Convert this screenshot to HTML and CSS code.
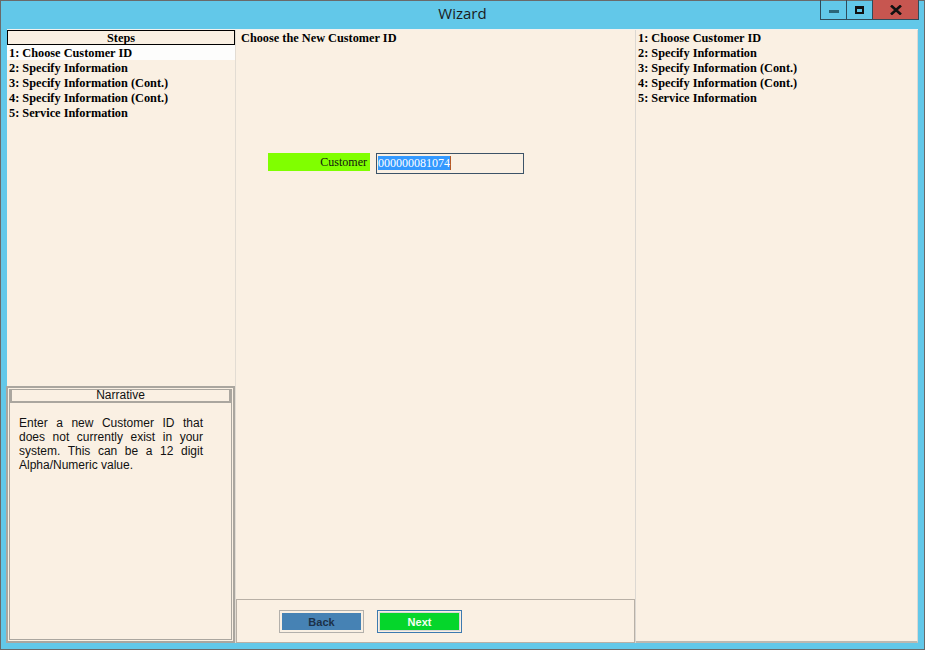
FILE: index.html
```html
<!DOCTYPE html>
<html>
<head>
<meta charset="utf-8">
<link rel="stylesheet" href="styles.css">
</head>
<body>
<div class="window">
  <div class="titlebar">
    <div class="title">Wizard</div>
    <div class="controls">
      <div class="ctl ctl-min"><span class="min-bar"></span></div>
      <div class="ctl ctl-max"><span class="max-box"></span></div>
      <div class="ctl ctl-close">
        <svg width="12" height="10" viewBox="0 0 12 10"><path d="M1 0.5 L11 9.5 M11 0.5 L1 9.5" stroke="#111" stroke-width="2.6"/></svg>
      </div>
    </div>
  </div>
  <div class="client">
    <div class="leftcol">
      <div class="steps">
        <div class="steps-head">Steps</div>
        <div class="step active">1: Choose Customer ID</div>
        <div class="step">2: Specify Information</div>
        <div class="step">3: Specify Information (Cont.)</div>
        <div class="step">4: Specify Information (Cont.)</div>
        <div class="step">5: Service Information</div>
      </div>
      <div class="narrative">
        <div class="narrative-inner">
          <div class="narrative-head">Narrative</div>
          <p class="narrative-text">Enter a new Customer ID that does not currently exist in your system. This can be a 12 digit Alpha/Numeric value.</p>
        </div>
      </div>
    </div>
    <div class="midcol">
      <div class="page-title">Choose the New Customer ID</div>
      <div class="form">
        <div class="field">
          <div class="field-label">Customer</div>
          <div class="field-input"><span class="sel">000000081074</span></div>
        </div>
      </div>
      <div class="buttonbar">
        <div class="btn btn-back"><span>Back</span></div>
        <div class="btn btn-next"><span>Next</span></div>
      </div>
    </div>
    <div class="rightcol">
      <div class="rstep">1: Choose Customer ID</div>
      <div class="rstep">2: Specify Information</div>
      <div class="rstep">3: Specify Information (Cont.)</div>
      <div class="rstep">4: Specify Information (Cont.)</div>
      <div class="rstep">5: Service Information</div>
    </div>
  </div>
</div>
</body>
</html>
```

FILE: styles.css
```css
* { box-sizing: border-box; }
html, body { margin: 0; padding: 0; }
body { width: 925px; height: 650px; overflow: hidden; background: #62c8e9; }

.window {
  width: 925px;
  height: 650px;
  border: 1px solid #6a6a6a;
  background: #62c8e9;
  display: flex;
  flex-direction: column;
}

.titlebar {
  position: relative;
  height: 28px;
  flex: none;
  display: flex;
  align-items: center;
  justify-content: center;
}
.title {
  font-family: "Open Sans", "Noto Sans", sans-serif;
  font-size: 15px;
  color: #1b1b1b;
  margin-top: -4px;
}
.controls {
  position: absolute;
  top: -1px;
  right: 5px;
  display: flex;
  height: 20px;
  border: 1px solid #2f4b5a;
  border-top: none;
}
.ctl {
  height: 19px;
  display: flex;
  align-items: center;
  justify-content: center;
}
.ctl-min { width: 26px; border-right: 1px solid #2f4b5a; }
.ctl-max { width: 26px; border-right: 1px solid #2f4b5a; }
.ctl-close { width: 45px; background: #c75650; }
.min-bar { display: block; width: 10px; height: 3px; background: #2b6578; margin-top: 4px; }
.max-box { display: block; width: 9px; height: 8px; border: 2px solid #111; border-top-width: 3px; }

.client {
  flex: 1;
  margin: 0 6px 6px 6px;
  background: #faf0e3;
  display: flex;
  border-top: 1px solid #f3f1ee;
}

.leftcol {
  width: 229px;
  flex: none;
  display: flex;
  flex-direction: column;
  border-right: 1px solid #e2dcd3;
}
.steps { flex: 1; }
.steps-head {
  height: 15px;
  border: 1px solid #000;
  text-align: center;
  font-family: "Liberation Serif", serif;
  font-weight: bold;
  font-size: 12.3px;
  padding-top: 1px;
  line-height: 13px;
}
.step, .rstep {
  height: 15px;
  font-family: "Liberation Serif", serif;
  font-weight: bold;
  font-size: 12.3px;
  color: #000;
  white-space: nowrap;
  padding-left: 2px;
}
.step { padding-top: 2px; line-height: 13px; }
.rstep { line-height: 15px; }
.step.active { background: #fdfdfc; }

.narrative {
  height: 257px;
  flex: none;
  border: 2px solid #aaa69f;
  padding: 1px;
  margin-left: -1px;
}
.narrative-inner {
  height: 100%;
  border: 1px solid #aaa69f;
  border-top: none;
}
.narrative-head {
  height: 14px;
  border: 2px solid #aaa69f;
  border-top-width: 1px;
  text-align: center;
  font-family: "Liberation Sans", Arial, sans-serif;
  font-size: 12px;
  line-height: 11px;
  color: #111;
}
.narrative-text {
  margin: 13px 28px 0 9px;
  font-family: "Liberation Sans", Arial, sans-serif;
  font-size: 12px;
  line-height: 14px;
  text-align: justify;
  color: #111;
}

.midcol {
  width: 400px;
  flex: none;
  display: flex;
  flex-direction: column;
  border-right: 1px solid #dcd8d2;
}
.page-title {
  font-family: "Liberation Serif", serif;
  font-weight: bold;
  font-size: 12.3px;
  line-height: 15px;
  padding: 1px 0 0 5px;
}
.form { flex: 1; padding: 107px 0 0 32px; }
.field { display: flex; align-items: flex-start; }
.field-label {
  width: 102px;
  height: 18px;
  background: #80ff00;
  text-align: right;
  padding-right: 3px;
  font-family: "Liberation Serif", serif;
  font-size: 12px;
  line-height: 18px;
  color: #111;
}
.field-input {
  margin-left: 6px;
  width: 148px;
  height: 21px;
  border: 1px solid #3c5368;
  padding: 2px 0 0 1px;
  font-family: "Liberation Serif", serif;
  font-size: 12px;
  line-height: 15px;
}
.sel { background: #3399ff; color: #fff; border-right: 1px solid #b45a28; }

.buttonbar {
  height: 44px;
  flex: none;
  border: 1px solid #b8b0a6;
  display: flex;
  align-items: flex-start;
  padding: 10px 0 0 42px;
  gap: 13px;
}
.btn {
  width: 85px;
  height: 23px;
  padding: 2px;
  display: flex;
}
.btn span {
  flex: 1;
  display: flex;
  align-items: center;
  justify-content: center;
  font-family: "Liberation Sans", Arial, sans-serif;
  font-weight: bold;
  font-size: 11px;
}
.btn-back { border: 1px solid #b3b0ab; }
.btn-back span { background: #4682b4; color: #1c3148; }
.btn-next { border: 1px solid #3d7ab0; padding: 1px; }
.btn-next span { background: #05d62b; color: #f4fff4; border: 1px solid #d8d8d8; }

.rightcol {
  flex: 1;
  padding-top: 1px;
  border-right: 1px solid #dcd8d2;
  border-bottom: 2px solid #bdb8b0;
}
```
